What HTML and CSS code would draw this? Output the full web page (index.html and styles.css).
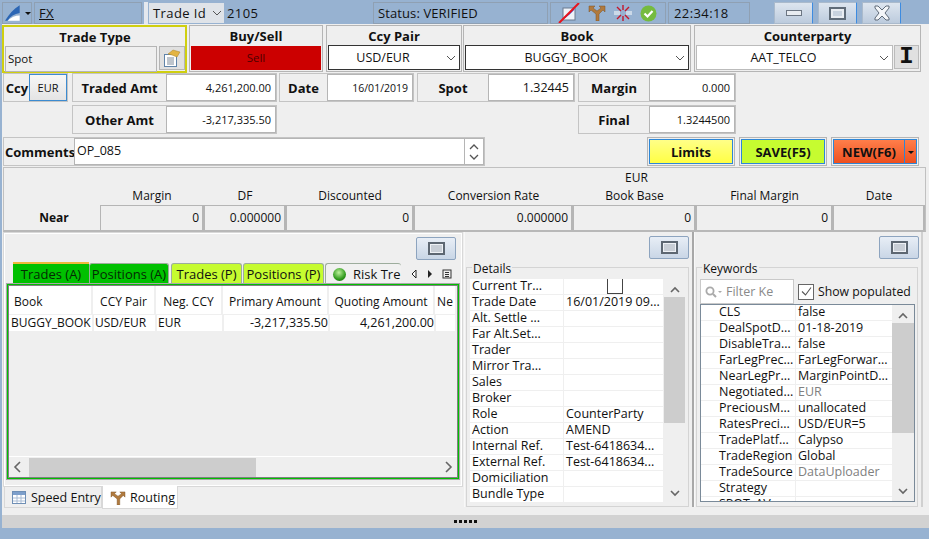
FILE: index.html
```html
<!DOCTYPE html>
<html lang="en">
<head>
  <meta charset="UTF-8" />
  <title>FX Trade</title>
  <link rel="stylesheet" href="styles.css">
</head>
<body>

  <div class="topbar">
    <div class="seg seg-logo">
      <svg width="22" height="18" viewBox="0 0 22 18"><path d="M0 18 C5 10 10 4 17 0 L17 9 C11 10 6 13 3 18Z" fill="#2c66b4"/><path d="M3 18 C7 14 12 12 17 12 L17 18Z" fill="#fff"/></svg>
      <span class="caret"></span>
    </div>
    <div class="seg seg-fx"><u>FX</u></div>
    <div class="grip"></div>
    <div class="seg seg-id">
      <div class="id-combo">Trade Id <svg width="10" height="6" viewBox="0 0 10 6"><path d="M1 1l4 4 4-4" fill="none" stroke="#555"/></svg></div>
      <span>2105</span>
    </div>
    <div class="seg seg-status">Status: VERIFIED</div>
    <div class="seg seg-icons">
      <svg width="22" height="20" viewBox="0 0 22 20"><rect x="5" y="5" width="12" height="12" fill="#eef2f8" stroke="#6b7a90"/><path d="M6 15l5-4 5-5" fill="none" stroke="#2a3fd0" stroke-width="1.5"/><path d="M1 20L21 0" stroke="#e8141c" stroke-width="2"/></svg>
      <svg class="icon-route" width="18" height="16" viewBox="0 0 18 16"><path d="M8 16V9L3 5 1 7V1h6L5 3l4 3 4-3-2-2h6v6l-2-2-4 4v7z" fill="#b07a3e" stroke="#7d5226" stroke-width=".5"/></svg>
      <svg width="18" height="18" viewBox="0 0 18 18"><path d="M9 1v5M9 12v5M3 3l4 4M15 3l-4 4M3 15l4-4M15 15l-4-4" stroke="#c3182c" stroke-width="1.4"/><path d="M0 8h6M12 8h6M0 10h6M12 10h6" stroke="#fff" stroke-width="1.2"/></svg>
      <svg width="17" height="17" viewBox="0 0 17 17"><circle cx="8.5" cy="8.5" r="8" fill="#75bb3f"/><path d="M4.5 8.5l3 3 5-5.5" fill="none" stroke="#fff" stroke-width="2.2"/></svg>
    </div>
    <div class="seg seg-time">22:34:18</div>
    <div class="win-btns">
      <div class="win-btn"><span class="win-min"></span></div>
      <div class="win-btn"><span class="win-max"></span></div>
      <div class="win-btn">
        <svg width="18" height="16" viewBox="0 0 18 16"><path d="M2 1h3l4 4 4-4h3v2l-4 5 4 5v2h-3l-4-4-4 4H2v-2l4-5-4-5z" fill="#f4f6f9" stroke="#5f6b78"/></svg>
      </div>
    </div>
  </div>

  <div class="main">
    <div class="row-head">
      <div class="head-card card-type">
        <div class="head-title">Trade Type</div>
        <div class="type-body">
          <div class="type-field">Spot</div>
          <div class="type-btn">
            <svg width="18" height="18" viewBox="0 0 18 18"><rect x="1.500" y="5.500" width="12" height="12" fill="#fff" stroke="#5f83a8"/><path d="M4 9h7M4 11h7M4 13h7M4 15h7" stroke="#7d8a99"/><path d="M5 5l5-4 7 2-3 5-5-2z" fill="#e3b443" stroke="#a8822c" stroke-width=".5"/></svg>
          </div>
        </div>
      </div>
      <div class="head-card card-buy">
        <div class="head-title">Buy/Sell</div>
        <div class="sell">Sell</div>
      </div>
      <div class="head-card card-pair">
        <div class="head-title">Ccy Pair</div>
        <div class="combo combo-dark">USD/EUR<svg width="10" height="6" viewBox="0 0 10 6"><path d="M1 1l4 4 4-4" fill="none" stroke="#555"/></svg></div>
      </div>
      <div class="head-card card-book">
        <div class="head-title">Book</div>
        <div class="combo combo-dark">BUGGY_BOOK<svg width="10" height="6" viewBox="0 0 10 6"><path d="M1 1l4 4 4-4" fill="none" stroke="#555"/></svg></div>
      </div>
      <div class="head-card card-party">
        <div class="head-title">Counterparty</div>
        <div class="party-body">
          <div class="combo">AAT_TELCO<svg width="10" height="6" viewBox="0 0 10 6"><path d="M1 1l4 4 4-4" fill="none" stroke="#555"/></svg></div>
          <div class="i-btn">I</div>
        </div>
      </div>
    </div>

    <div class="row-fields">
      <div class="field field-ccy"><b class="ccy-lab">Ccy</b><div class="ccy-btn">EUR</div></div>
      <div class="field field-amt"><b>Traded Amt</b><div class="val">4,261,200.00</div></div>
      <div class="field field-date"><b>Date</b><div class="val val-date">16/01/2019</div></div>
      <div class="field field-spot"><b>Spot</b><div class="val val-big">1.32445</div></div>
      <div class="field field-margin"><b>Margin</b><div class="val">0.000</div></div>
    </div>

    <div class="row-fields row-second">
      <div class="field field-amt"><b>Other Amt</b><div class="val">-3,217,335.50</div></div>
      <div class="field field-margin"><b>Final</b><div class="val">1.3244500</div></div>
    </div>

    <div class="row-comments">
      <div class="field field-comments">
        <b class="comm-lab">Comments</b>
        <div class="comm-val">OP_085</div>
        <div class="spin">
          <svg width="10" height="6" viewBox="0 0 10 6"><path d="M1 5l4-4 4 4" fill="none" stroke="#555" stroke-width="1.3"/></svg>
          <svg width="10" height="6" viewBox="0 0 10 6"><path d="M1 1l4 4 4-4" fill="none" stroke="#555" stroke-width="1.3"/></svg>
        </div>
      </div>
      <div class="act-wrap act-limits"><div class="act">Limits</div></div>
      <div class="act-wrap act-save"><div class="act">SAVE(F5)</div></div>
      <div class="act-wrap act-new"><div class="act">NEW(F6)</div><div class="act-drop"></div></div>
    </div>

    <div class="near">
      <div class="near-eur"><span class="ne-spacer"></span><span>EUR</span></div>
      <div class="near-grid near-heads">
        <span></span><span>Margin</span><span>DF</span><span>Discounted</span><span>Conversion Rate</span><span>Book Base</span><span>Final Margin</span><span>Date</span>
      </div>
      <div class="near-grid near-vals">
        <b>Near</b><span>0</span><span>0.000000</span><span>0</span><span>0.000000</span><span>0</span><span>0</span><span></span>
      </div>
    </div>

    <div class="lower">
      <div class="pane-left">
        <div class="pane-left-in">
          <div class="tool-row"><div class="tool-btn"><span></span></div></div>
          <div class="tabs">
            <div class="tab tab-a tab-on">Trades (A)</div>
            <div class="tab tab-a">Positions (A)</div>
            <div class="tab tab-p">Trades (P)</div>
            <div class="tab tab-p">Positions (P)</div>
            <div class="tab tab-risk"><i class="ball"></i>Risk Tre</div>
            <div class="tab-nav">
              <svg width="8" height="10" viewBox="0 0 8 10"><path d="M6 1L2 5l4 4z" fill="#fff" stroke="#222"/></svg>
              <svg width="8" height="10" viewBox="0 0 8 10"><path d="M2 1l4 4-4 4z" fill="#222"/></svg>
              <svg width="10" height="10" viewBox="0 0 10 10"><rect x="1" y="1" width="8" height="8" fill="none" stroke="#333"/><path d="M3 3.500h4M3 5.500h4M3 7.500h4" stroke="#333"/></svg>
            </div>
          </div>
          <div class="trades-box">
            <div class="trades-in">
              <div class="t-grid t-head">
                <span>Book</span><span>CCY Pair</span><span>Neg. CCY</span><span>Primary Amount</span><span>Quoting Amount</span><span>Ne</span>
              </div>
              <div class="t-grid t-row">
                <span>BUGGY_BOOK</span><span>USD/EUR</span><span>EUR</span><span class="num">-3,217,335.50</span><span class="num">4,261,200.00</span><span></span>
              </div>
              <div class="t-empty"></div>
              <div class="hscroll">
                <svg width="10" height="12" viewBox="0 0 10 12"><path d="M7 1L2 6l5 5" fill="none" stroke="#666" stroke-width="1.6"/></svg>
                <div class="hscroll-track"><div class="hscroll-thumb"></div></div>
                <svg width="10" height="12" viewBox="0 0 10 12"><path d="M3 1l5 5-5 5" fill="none" stroke="#666" stroke-width="1.6"/></svg>
              </div>
            </div>
          </div>
        </div>
        <div class="bottom-tabs">
          <div class="b-tab">
            <svg width="14" height="13" viewBox="0 0 14 13"><rect x=".5" y=".5" width="13" height="12" fill="#fff" stroke="#6f8fb5"/><rect x="1" y="1" width="12" height="3" fill="#7d9fcb"/><path d="M5 4v8M9 4v8M1 7h12M1 10h12" stroke="#a9bcd4"/></svg>
            Speed Entry
          </div>
          <div class="b-tab b-tab-on">
            <svg width="16" height="14" viewBox="0 0 18 16"><path d="M8 16V9L3 5 1 7V1h6L5 3l4 3 4-3-2-2h6v6l-2-2-4 4v7z" fill="#b07a3e" stroke="#7d5226" stroke-width=".5"/></svg>
            Routing
          </div>
        </div>
      </div>

      <div class="pane-side pane-details">
        <div class="tool-row"><div class="tool-btn"><span></span></div></div>
        <div class="group">
          <div class="group-title">Details</div>
          <div class="list-wrap">
            <div class="list">
              <div class="l-row"><span>Current Tr...</span><span class="l-check"><i></i></span></div>
              <div class="l-row"><span>Trade Date</span><span>16/01/2019 09...</span></div>
              <div class="l-row"><span>Alt. Settle ...</span><span></span></div>
              <div class="l-row"><span>Far Alt.Set...</span><span></span></div>
              <div class="l-row"><span>Trader</span><span></span></div>
              <div class="l-row"><span>Mirror Tra...</span><span></span></div>
              <div class="l-row"><span>Sales</span><span></span></div>
              <div class="l-row"><span>Broker</span><span></span></div>
              <div class="l-row"><span>Role</span><span>CounterParty</span></div>
              <div class="l-row"><span>Action</span><span>AMEND</span></div>
              <div class="l-row"><span>Internal Ref.</span><span>Test-6418634...</span></div>
              <div class="l-row"><span>External Ref.</span><span>Test-6418634...</span></div>
              <div class="l-row"><span>Domiciliation</span><span></span></div>
              <div class="l-row"><span>Bundle Type</span><span></span></div>
            </div>
            <div class="vscroll vscroll-details">
              <svg width="10" height="7" viewBox="0 0 10 7"><path d="M1 6l4-4 4 4" fill="none" stroke="#666" stroke-width="1.6"/></svg>
              <div class="vscroll-track"><div class="vscroll-thumb"></div></div>
              <svg width="10" height="7" viewBox="0 0 10 7"><path d="M1 1l4 4 4-4" fill="none" stroke="#666" stroke-width="1.6"/></svg>
            </div>
          </div>
        </div>
      </div>

      <div class="pane-side pane-keywords">
        <div class="tool-row"><div class="tool-btn"><span></span></div></div>
        <div class="group">
          <div class="group-title">Keywords</div>
          <div class="kw-tools">
            <div class="kw-filter">
              <svg width="19" height="12" viewBox="0 0 19 12"><circle cx="5" cy="5" r="3.600" fill="none" stroke="#aaa" stroke-width="1.800"/><path d="M8 8l3 3" stroke="#aaa" stroke-width="2"/><path d="M13 5h4l-2 2z" fill="#aaa"/></svg>
              <span>Filter Ke</span>
            </div>
            <label class="kw-check"><i><svg width="13" height="13" viewBox="0 0 13 13"><path d="M2 6.500l3.500 3.500L11 2.500" fill="none" stroke="#555" stroke-width="1.100"/></svg></i>Show populated</label>
          </div>
          <div class="kw-table">
            <div class="list">
              <div class="l-row"><span>CLS</span><span>false</span></div>
              <div class="l-row"><span>DealSpotD...</span><span>01-18-2019</span></div>
              <div class="l-row"><span>DisableTra...</span><span>false</span></div>
              <div class="l-row"><span>FarLegPrec...</span><span>FarLegForwar...</span></div>
              <div class="l-row"><span>NearLegPr...</span><span>MarginPointD...</span></div>
              <div class="l-row"><span>Negotiated...</span><span class="muted">EUR</span></div>
              <div class="l-row"><span>PreciousM...</span><span>unallocated</span></div>
              <div class="l-row"><span>RatesPreci...</span><span>USD/EUR=5</span></div>
              <div class="l-row"><span>TradePlatf...</span><span>Calypso</span></div>
              <div class="l-row"><span>TradeRegion</span><span>Global</span></div>
              <div class="l-row"><span>TradeSource</span><span class="muted">DataUploader</span></div>
              <div class="l-row"><span>Strategy</span><span></span></div>
              <div class="l-row"><span>SPOT_AV</span><span></span></div>
            </div>
            <div class="vscroll vscroll-kw">
              <svg width="10" height="7" viewBox="0 0 10 7"><path d="M1 6l4-4 4 4" fill="none" stroke="#666" stroke-width="1.6"/></svg>
              <div class="vscroll-track"><div class="vscroll-thumb"></div></div>
              <svg width="10" height="7" viewBox="0 0 10 7"><path d="M1 1l4 4 4-4" fill="none" stroke="#666" stroke-width="1.6"/></svg>
            </div>
          </div>
        </div>
      </div>
    </div>
  </div>

  <div class="sash"><span></span><span></span><span></span><span></span><span></span></div>

</body>
</html>
```

FILE: styles.css
```css
* {
  box-sizing: border-box;
}
html, body {
  margin: 0;
  height: 539px;
  overflow: hidden;
}
body {
  font-family: "Open Sans", "Noto Sans", sans-serif;
  font-size: 12px;
  color: #111;
  background: #97b2d1;
}
b {
  font-weight: 700;
  font-size: 13px;
}

/* top strip */
.topbar {
  height: 24px;
  display: flex;
  padding: 2px 0 0 2px;
}
.seg {
  height: 22px;
  border: 1px solid #8fa0b3;
  display: flex;
  align-items: center;
  font-size: 13px;
  letter-spacing: .4px;
}
.seg-logo {
  width: 30px;
  padding-left: 2px;
}
.caret {
  border: 3px solid transparent;
  border-top: 3px solid #111;
  margin: 3px 0 0 1px;
}
.seg-fx {
  width: 108px;
  margin-left: 2px;
  padding-left: 4px;
}
.grip {
  width: 4px;
  height: 22px;
  margin-left: 2px;
  background: #e4e8ee;
}
.seg-id {
  width: 222px;
  margin-left: 1px;
  border: 0;
}
.seg-id span {
  margin-left: 3px;
}
.id-combo {
  width: 75px;
  height: 20px;
  background: #dfe3e8;
  display: flex;
  align-items: center;
  gap: 6px;
  padding-left: 4px;
}
.seg-status {
  width: 175px;
  margin-left: 2px;
  padding-left: 4px;
  letter-spacing: .1px;
}
.seg-icons {
  width: 116px;
  margin-left: 2px;
  padding-left: 7px;
  gap: 8px;
}
.seg-time {
  width: 82px;
  margin-left: 2px;
  padding-left: 5px;
}
.win-btns {
  display: flex;
  gap: 5px;
  margin-left: 24px;
}
.win-btn {
  width: 39px;
  height: 22px;
  background: linear-gradient(#dde5ef, #bccbdd);
  border: 1px solid #aabacc;
  border-right: 1px solid #3d8be0;
  display: flex;
  align-items: center;
  justify-content: center;
}
.win-min {
  width: 16px;
  height: 6px;
  background: #e8ecf1;
  border: 1px solid #6c7683;
}
.win-max {
  width: 17px;
  height: 13px;
  background: #c8d2de;
  border: 2px solid #5f6b78;
  box-shadow: inset 0 0 0 2px #e8ecf1;
}

/* main panel */
.main {
  margin-left: 2px;
  height: 491px;
  background: #efefef;
}
.row-head {
  height: 48px;
  display: flex;
  padding-top: 1px;
  gap: 2px;
}
.head-card {
  height: 47px;
  border: 1px solid #b5b5b5;
  padding: 1px;
  display: flex;
  flex-direction: column;
}
.head-title {
  height: 19px;
  text-align: center;
  font-weight: 700;
  font-size: 13px;
  line-height: 18px;
}
.card-type {
  width: 185px;
  border: 2px solid #cfcf10;
  height: 48px;
  padding: 1px 0 0 1px;
}
.card-type .head-title {
  height: 18px;
}
.card-buy {
  width: 134px;
  padding: 1px 1px 0;
}
.card-pair {
  width: 136px;
  margin-left: 1px;
}
.card-book {
  width: 228px;
  margin-left: -1px;
}
.card-party {
  width: 227px;
  margin-left: 1px;
}
.type-body {
  display: flex;
  gap: 1px;
}
.type-field {
  width: 152px;
  height: 26px;
  border: 1px solid #b5b5b5;
  padding-left: 2px;
  line-height: 24px;
  font-size: 11.500px;
}
.type-btn {
  width: 26px;
  height: 24px;
  margin-left: 1px;
  border: 1px solid #b5b5b5;
  background: #e0e0e0;
  display: flex;
  align-items: center;
  justify-content: center;
}
.sell {
  height: 24px;
  background: #cc0000;
  color: #4d0000;
  text-align: center;
  line-height: 24px;
  font-size: 11.500px;
}
.combo {
  position: relative;
  height: 25px;
  background: #fff;
  border: 1px solid #bbb;
  text-align: center;
  line-height: 24px;
  font-size: 12.500px;
  padding-right: 22px;
  flex: 1;
}
.combo svg {
  position: absolute;
  right: 3px;
  top: 9px;
}
.combo-dark {
  border-color: #333;
  flex: none;
}
.party-body {
  display: flex;
  gap: 1px;
}
.i-btn {
  width: 25px;
  height: 24px;
  background: #e0e0e0;
  border: 1px solid #bbb;
  text-align: center;
  font-family: "Liberation Mono", monospace;
  font-weight: bold;
  font-size: 24px;
  line-height: 22px;
}

/* field rows */
.row-fields {
  height: 32px;
  display: flex;
  padding: 1px 0 0 1px;
}
.row-second {
  padding-left: 70px;
}
.field {
  height: 29px;
  border: 1px solid #c4c4c4;
  display: flex;
  align-items: stretch;
}
.field b {
  flex: 1;
  text-align: center;
  line-height: 29px;
}
.val {
  background: #fff;
  border: 1px solid #b5b5b5;
  text-align: right;
  padding-right: 4px;
  line-height: 26px;
  font-size: 11px;
}
.val-big {
  font-size: 12.500px;
}
.val-date {
  font-size: 10.500px;
}
.field-ccy {
  width: 65px;
}
.field .ccy-lab {
  flex: none;
  width: 25px;
  padding-left: 1px;
}
.ccy-btn {
  width: 39px;
  border: 1px solid #3c8bd0;
  background: linear-gradient(#f7f7f7, #e4e4e4);
  text-align: center;
  line-height: 25px;
  font-size: 11px;
}
.field-amt {
  width: 205px;
  margin-left: 4px;
}
.row-second .field-amt {
  margin-left: 0;
}
.field-amt .val {
  width: 110px;
}
.field-date {
  width: 135px;
  margin-left: 2px;
}
.field-date .val {
  width: 86px;
}
.field-spot {
  width: 158px;
  margin-left: 3px;
}
.field-spot .val {
  width: 86px;
}
.field-margin {
  width: 158px;
  margin-left: 3px;
}
.row-second .field-margin {
  margin-left: 301px;
}
.field-margin .val {
  width: 86px;
}
.row-comments {
  height: 31px;
  display: flex;
  padding: 1px 0 0 1px;
}
.field-comments {
  width: 482px;
}
.field .comm-lab {
  flex: none;
  width: 70px;
  padding-left: 1px;
  text-align: left;
}
.comm-val {
  flex: 1;
  background: #fff;
  border: 1px solid #b5b5b5;
  padding-left: 2px;
  line-height: 24px;
  font-size: 12.500px;
}
.spin {
  width: 19px;
  background: #fff;
  border: 1px solid #b5b5b5;
  border-left: 0;
  display: flex;
  flex-direction: column;
  align-items: center;
  justify-content: center;
  gap: 4px;
}
.act-wrap {
  width: 88px;
  height: 29px;
  border: 1px solid #b5b5b5;
  padding: 1px;
  display: flex;
}
.act {
  flex: 1;
  border: 1px solid #2d86d6;
  text-align: center;
  font-weight: 700;
  font-size: 13px;
  line-height: 24px;
}
.act-limits {
  margin-left: 162px;
}
.act-limits .act {
  background: linear-gradient(#ffff88, #ffff44);
}
.act-save {
  margin-left: 4px;
}
.act-save .act {
  background: #c6fc30;
}
.act-new {
  margin-left: 4px;
}
.act-new .act {
  background: linear-gradient(#ff7e4a, #ee5020);
}
.act-drop {
  width: 12px;
  background: linear-gradient(#ff7e4a, #ee5020);
  border: 1px solid #2d86d6;
  border-left: 0;
  position: relative;
}
.act-drop::after {
  content: "";
  position: absolute;
  left: 3px;
  top: 11px;
  border: 3px solid transparent;
  border-top: 3px solid #111;
}

/* near strip */
.near {
  width: 923px;
  margin-left: 1px;
  height: 65px;
  border: 1px solid #c0c0c0;
  border-bottom: 2px solid #b8b8b8;
}
.near-eur {
  height: 19px;
  display: flex;
  line-height: 20px;
}
.ne-spacer {
  width: 621px;
}
.near-grid {
  display: grid;
  grid-template-columns: 96px 104px 82px 128px 159px 123px 137px 1fr;
}
.near-heads {
  height: 18px;
  text-align: center;
  line-height: 18px;
}
.near-vals {
  height: 25px;
  text-align: right;
  line-height: 23px;
}
.near-vals b {
  text-align: center;
  padding-left: 4px;
  font-size: 12px;
  line-height: 25px;
}
.near-vals span {
  border: 1px solid #b5b5b5;
  border-width: 1px 2px 0 1px;
  padding-right: 3px;
}

/* lower panes */
.lower {
  display: flex;
  margin-left: 1px;
  height: 275px;
}
.pane-left {
  width: 460px;
  display: flex;
  flex-direction: column;
}
.pane-left-in {
  height: 255px;
  border: 1px solid #d8d8d8;
  outline: 1px solid #fff;
  outline-offset: -2px;
  padding: 2px 3px;
}
.tool-row {
  height: 25px;
  display: flex;
  justify-content: flex-end;
  padding: 2px 3px 0 0;
}
.pane-left .tool-row {
  height: 26px;
}
.tool-btn {
  width: 40px;
  height: 23px;
  background: linear-gradient(#e8eef6, #c9d6e6);
  border: 1px solid #8da4bf;
  border-radius: 2px;
  display: flex;
  align-items: center;
  justify-content: center;
}
.tool-btn span {
  width: 17px;
  height: 13px;
  border: 2px solid #5d6772;
  background: #c8ced6;
  box-shadow: inset 0 0 0 1px #eef1f5;
}
.tabs {
  height: 24px;
  display: flex;
  align-items: flex-end;
  padding-left: 6px;
  font-size: 13px;
}
.tab {
  height: 22px;
  line-height: 21px;
  text-align: center;
  border-radius: 3px 3px 0 0;
  border: 1px solid #9dad9d;
  border-bottom: 0;
  white-space: nowrap;
}
.tab-a {
  background: #00c000;
  color: #042a04;
  width: 80px;
}
.tab-on {
  width: 76px;
  height: 23px;
  border: 0;
  border-top: 2px solid #f0b83c;
  border-radius: 0;
}
.tab-p {
  background: #c6fc30;
  width: 71px;
  margin-left: 2px;
}
.tab-p:nth-child(4) {
  width: 81px;
  margin-left: 1px;
}
.tab-risk {
  width: 76px;
  margin-left: 1px;
  background: #f1f1f1;
  border-right: 0;
  overflow: hidden;
  text-align: left;
  padding-left: 7px;
}
.ball {
  display: inline-block;
  width: 13px;
  height: 13px;
  border-radius: 50%;
  margin-right: 7px;
  vertical-align: -2px;
  background: radial-gradient(circle at 45% 35%, #bdf29c, #2f9a1c 60%, #195c10);
}
.tab-nav {
  display: flex;
  align-items: center;
  gap: 8px;
  height: 22px;
  margin-left: 9px;
}
.trades-box {
  height: 195px;
  width: 452px;
  border: 1px solid #00c000;
  box-shadow: 0 0 0 1px #a8a8a8;
  margin-top: -1px;
  position: relative;
}
.trades-in {
  height: 100%;
  border: 1px solid #808080;
  display: flex;
  flex-direction: column;
}
.t-grid {
  display: grid;
  grid-template-columns: 84px 63px 67px 106px 106px 1fr;
  background: #fff;
}
.t-grid span {
  border-right: 2px solid #efefef;
  white-space: nowrap;
}
.t-head {
  height: 29px;
  line-height: 32px;
  font-size: 12px;
  text-align: center;
  border-bottom: 1px solid #efefef;
}
.t-head span:first-child {
  text-align: left;
  padding-left: 5px;
}
.t-row {
  height: 16px;
  line-height: 16px;
  font-size: 12px;
  padding-left: 1px;
}
.t-row span {
  padding-left: 1px;
}
.num {
  text-align: right;
  font-size: 12.500px;
}
.t-empty {
  flex: 1;
  border-bottom: 1px solid #fff;
}
.hscroll {
  height: 20px;
  display: flex;
  align-items: center;
  padding: 0 4px;
}
.hscroll-track {
  flex: 1;
  padding: 0 6px;
  height: 19px;
}
.hscroll-thumb {
  width: 227px;
  height: 100%;
  background: #cdcdcd;
}
.bottom-tabs {
  display: flex;
  height: 20px;
  font-size: 12.500px;
  padding-left: 1px;
}
.b-tab {
  height: 21px;
  width: 98px;
  border: 1px solid #d8d8d8;
  border-top: 0;
  display: flex;
  align-items: center;
  gap: 5px;
  padding: 1px 0 0 7px;
}
.b-tab-on {
  width: 76px;
  height: 23px;
  margin-top: -1px;
  background: #fff;
  gap: 4px;
}
.pane-side {
  border-left: 1px solid #f8f8f8;
  padding-top: 2px;
}
.pane-details {
  width: 230px;
  margin-left: 1px;
  border-right: 2px solid #a8a8a8;
}
.pane-keywords {
  width: 229px;
  border-right: 2px solid #d0d0d0;
}
.pane-details .tool-row {
  padding-right: 3px;
}
.pane-keywords .tool-row {
  padding-right: 2px;
}
.group {
  position: relative;
  margin: 8px 3px 0 1px;
  height: 240px;
  border: 1px solid #d4d4d4;
  padding: 11px 3px 0;
}
.group-title {
  position: absolute;
  left: 5px;
  top: -7px;
  background: #efefef;
  padding: 0 1px;
  line-height: 15px;
}
.list-wrap {
  display: flex;
}
.list {
  flex: 1;
  min-width: 0;
  overflow: hidden;
  background: #fff;
}
.l-row {
  height: 16px;
  display: grid;
  grid-template-columns: 94px 1fr;
  line-height: 14px;
  font-size: 12.500px;
  border-bottom: 1px solid #efefef;
  white-space: nowrap;
}
.l-row span {
  padding-left: 2px;
}
.l-row span:first-child {
  border-right: 1px solid #efefef;
}
.l-check {
  text-align: center;
}
.l-check i {
  display: inline-block;
  width: 16px;
  height: 15px;
  border: 1px solid #444;
  border-top: 0;
  background: #fff;
}
.muted {
  color: #808080;
}
.vscroll {
  width: 21px;
  display: flex;
  flex-direction: column;
  align-items: center;
  padding-top: 7px;
}
.vscroll-track {
  flex: 1;
  width: 100%;
  padding: 4px 0;
}
.vscroll-thumb {
  height: 126px;
  background: #cdcdcd;
}
.vscroll-details {
  margin-left: 1px;
  height: 224px;
  padding-bottom: 6px;
}
.kw-tools {
  display: flex;
  align-items: center;
  height: 25px;
}
.kw-filter {
  width: 94px;
  height: 25px;
  background: #fff;
  border: 1px solid #c9c9c9;
  display: flex;
  align-items: center;
  gap: 2px;
  padding-left: 4px;
  color: #8a8a8a;
  font-size: 12.500px;
  overflow: hidden;
  white-space: nowrap;
}
.kw-check {
  display: flex;
  align-items: center;
  gap: 4px;
  margin-left: 4px;
  font-size: 12.250px;
}
.kw-check i {
  width: 16px;
  height: 16px;
  background: #fff;
  border: 1px solid #666;
  display: flex;
  align-items: center;
  justify-content: center;
}
.kw-table {
  display: flex;
  height: 198px;
  border: 1px solid #7a8a99;
  width: 215px;
}
.kw-table .l-row {
  grid-template-columns: 95px 1fr;
}
.kw-table .l-row span:first-child {
  padding-left: 18px;
}
.vscroll-kw {
  width: 22px;
  padding-bottom: 6px;
}
.vscroll-kw .vscroll-thumb {
  height: 110px;
}

/* bottom sash */
.sash {
  height: 13px;
  margin-left: 2px;
  background: #d2d2d2;
  display: flex;
  justify-content: center;
  align-items: center;
  gap: 2px;
}
.sash span {
  width: 3px;
  height: 3px;
  background: #111;
}
```
